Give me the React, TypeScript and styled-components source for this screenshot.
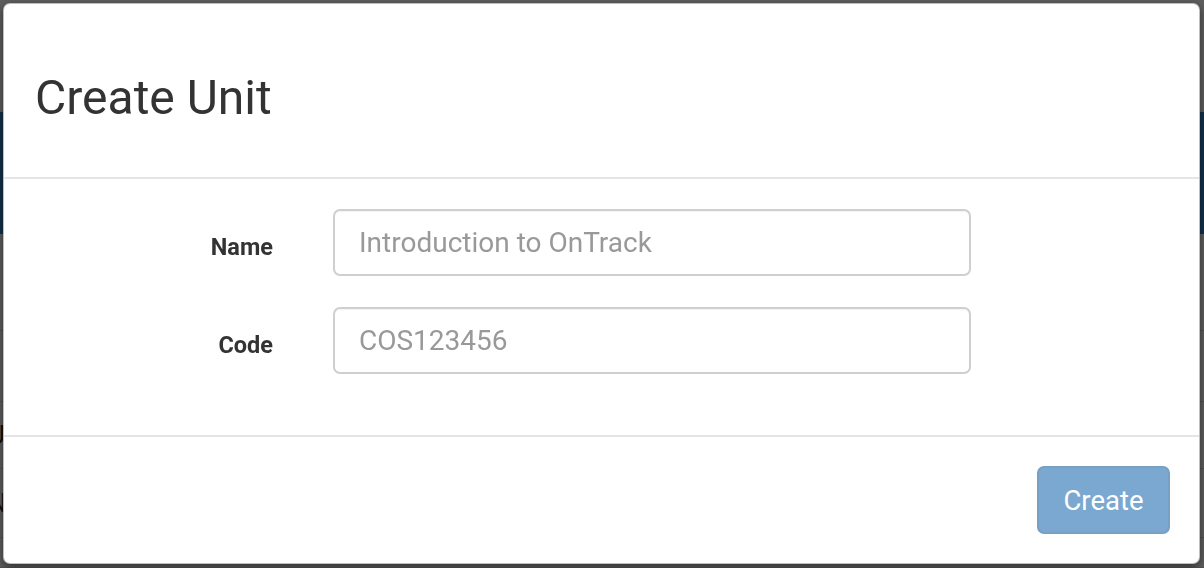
import React from "react";
import styled, { createGlobalStyle } from "styled-components";

const Global = createGlobalStyle`
  html, body { margin: 0; padding: 0; }
  body {
    width: 1204px;
    height: 568px;
    overflow: hidden;
    background: #5e5e5e;
    font-family: Roboto, "Helvetica Neue", Arial, sans-serif;
  }
  * { box-sizing: border-box; }
`;

/* ---------- page behind the backdrop ---------- */
const Page = styled.div`
  height: 568px;
  display: flex;
  flex-direction: column;
`;

const TopSpace = styled.div`
  height: 116px;
`;

const NavBand = styled.div`
  height: 127px;
  background: #14304a;
`;

const PageRow = styled.div<{ $h: number }>`
  height: ${(p) => p.$h}px;
  flex-shrink: 0;
  border-bottom: 1px solid #535353;
  display: flex;
  align-items: center;
  line-height: 1;
  overflow: hidden;
  white-space: nowrap;
  color: #111;
  font-size: 26px;
  text-indent: -12px;
`;

/* ---------- modal ---------- */
const Backdrop = styled.div`
  position: fixed;
  inset: 0;
  display: flex;
  padding: 3px 4px 4px 3px;
`;

const Dialog = styled.div`
  flex: 1;
  background: #fff;
  border: 1px solid rgba(0, 0, 0, 0.25);
  border-radius: 7px;
  box-shadow: 0 3px 9px rgba(0, 0, 0, 0.5);
  display: flex;
  flex-direction: column;
  overflow: hidden;
`;

const Header = styled.div`
  height: 175px;
  border-bottom: 2px solid #e5e5e5;
  padding: 16px 31px 0;
  display: flex;
  align-items: center;
`;

const Title = styled.h3`
  margin: 0;
  font-family: Roboto, "Helvetica Neue", Arial, sans-serif;
  font-weight: 400;
  font-size: 48px;
  line-height: 1.1;
  color: #333;
`;

const Body = styled.div`
  height: 256px;
  padding: 30px 0 0 0;
  display: flex;
  flex-direction: column;
  gap: 31px;
`;

const FormRow = styled.div`
  display: grid;
  grid-template-columns: 299px 698px;
  align-items: start;
`;

const Label = styled.label`
  padding-right: 30px;
  padding-top: 22px;
  text-align: right;
  font-size: 23.5px;
  font-weight: 700;
  color: #333;
  line-height: 1.4;
`;

const InputWrap = styled.div`
  padding: 0 30px;
`;

const Input = styled.input`
  display: block;
  width: 100%;
  height: 67px;
  border: 2px solid #cfcfcf;
  border-radius: 7px;
  padding: 0 24px;
  font-family: Roboto, "Helvetica Neue", Arial, sans-serif;
  font-size: 28px;
  color: #555;
  background: #fff;
  outline: none;
  box-shadow: inset 0 1px 1px rgba(0, 0, 0, 0.05);
  &::placeholder {
    color: #999;
  }
`;

const Footer = styled.div`
  flex: 1;
  border-top: 2px solid #e5e5e5;
  display: flex;
  justify-content: flex-end;
  align-items: flex-start;
  padding: 29px 29px 0 0;
`;

const Button = styled.button`
  width: 133px;
  height: 68px;
  border-radius: 7px;
  border: 2px solid #2e6da4;
  background: #337ab7;
  opacity: 0.65;
  color: #fff;
  font-family: Roboto, "Helvetica Neue", Arial, sans-serif;
  font-size: 27.5px;
  cursor: not-allowed;
  padding: 0;
`;

export default function App() {
  return (
    <>
      <Global />
      <Page>
        <TopSpace />
        <NavBand />
        <PageRow $h={97} />
        <PageRow $h={71} />
        <PageRow $h={67}>Unit</PageRow>
        <PageRow $h={69}>Name</PageRow>
        <PageRow $h={30} />
      </Page>
      <Backdrop>
        <Dialog>
          <Header>
            <Title>Create Unit</Title>
          </Header>
          <Body>
            <FormRow>
              <Label>Name</Label>
              <InputWrap>
                <Input placeholder="Introduction to OnTrack" />
              </InputWrap>
            </FormRow>
            <FormRow>
              <Label>Code</Label>
              <InputWrap>
                <Input placeholder="COS123456" />
              </InputWrap>
            </FormRow>
          </Body>
          <Footer>
            <Button disabled>Create</Button>
          </Footer>
        </Dialog>
      </Backdrop>
    </>
  );
}
